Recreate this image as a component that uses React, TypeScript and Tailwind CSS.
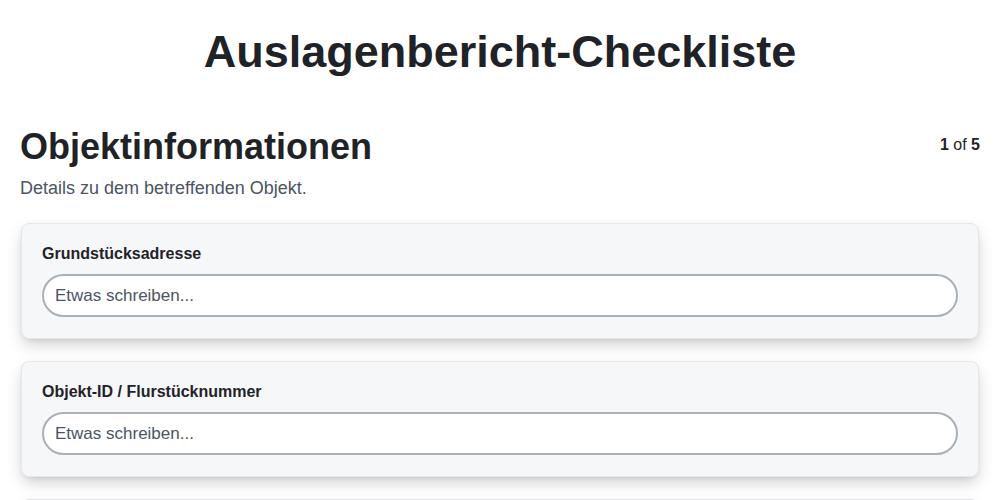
export default function App() {
  const fields = ["Grundstücksadresse", "Objekt-ID / Flurstücknummer", "Eigentümer"];
  return (
    <div className="min-h-screen bg-white text-[#1f2328]" style={{ fontFamily: '"Liberation Sans", Arial, sans-serif' }}>
      <h1 className="pt-6 text-center text-[45px] font-bold leading-tight">Auslagenbericht-Checkliste</h1>
      <div className="px-5 pt-11">
        <div className="flex items-start justify-between">
          <h2 className="text-[36px] font-bold leading-tight">Objektinformationen</h2>
          <div className="pt-[9px] text-base">
            <span className="font-bold">1</span> of <span className="font-bold">5</span>
          </div>
        </div>
        <p className="mt-[6px] text-[18px] text-[#4b5563]">Details zu dem betreffenden Objekt.</p>
        <div className="mt-[21px] flex flex-col gap-[22px]">
          {fields.map((f) => (
            <div key={f} className="mx-px rounded-lg border border-[#e5e7eb] bg-[#f6f7f9] px-5 pb-[21px] pt-[18px] shadow-[0_7px_16px_-2px_rgba(0,0,0,0.2),0_2px_5px_-2px_rgba(0,0,0,0.1)]">
              <label className="mb-2 block text-base font-bold leading-6">{f}</label>
              <input
                type="text"
                placeholder="Etwas schreiben..."
                className="block h-[43px] w-full rounded-full border-2 border-[#a9b0b8] bg-white pl-[11px] pr-3 text-[17px] placeholder:text-[#4b5563] outline-none"
              />
            </div>
          ))}
        </div>
      </div>
    </div>
  );
}
